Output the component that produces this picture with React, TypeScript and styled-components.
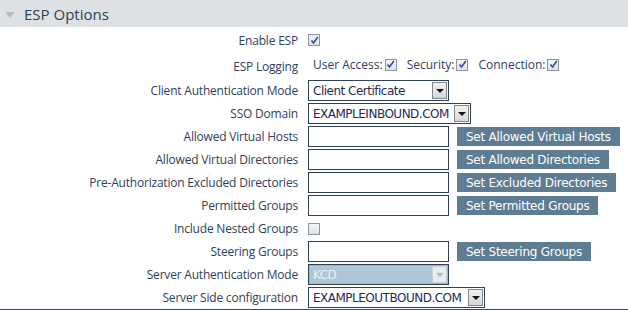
import styled, { createGlobalStyle } from 'styled-components';

const GlobalStyle = createGlobalStyle`
  html, body {
    margin: 0;
    padding: 0;
    background: #ffffff;
  }
  body {
    font-family: 'Open Sans', 'Liberation Sans', sans-serif;
  }
`;

const Panel = styled.div`
  width: 628px;
  height: 310px;
  background: #ffffff;
  overflow: hidden;
`;

const Header = styled.div`
  display: flex;
  align-items: center;
  gap: 9px;
  height: 27px;
  padding-left: 5px;
  background: #dde1e4;
  color: #2e3f55;
  font-size: 15px;
`;

const Caret = styled.span`
  width: 0;
  height: 0;
  border-left: 5px solid transparent;
  border-right: 5px solid transparent;
  border-top: 6px solid #b9bec3;
  margin-top: 2px;
`;

const Form = styled.div`
  display: grid;
  grid-template-columns: 298px 1fr;
  grid-template-rows: 26px 26px repeat(10, 23px);
  column-gap: 10px;
  border-bottom: 1px solid #3b4a5c;
`;

const Label = styled.div`
  display: flex;
  align-items: center;
  justify-content: flex-end;
  font-size: 12px;
  color: #30405a;
  white-space: nowrap;
  letter-spacing: -0.2px;
`;

const Cell = styled.div`
  display: flex;
  align-items: center;
  gap: 8px;
`;

const Inline = styled.span<{ $first?: boolean }>`
  display: flex;
  align-items: center;
  gap: 2px;
  margin-left: ${p => (p.$first ? '5px' : '10px')};
  margin-top: -3px;
  font-size: 12px;
  color: #30405a;
`;

const Box = styled.span`
  display: inline-flex;
  align-items: center;
  justify-content: center;
  width: 10px;
  height: 10px;
  border: 1px solid #8e959c;
  background: linear-gradient(#f4f5f6, #dfe2e5);
`;

const Check = ({ checked = true }: { checked?: boolean }) => (
  <Box>
    {checked && (
      <svg width="9" height="9" viewBox="0 0 9 9">
        <path d="M1.5 4.5 L3.5 7 L7.8 1" fill="none" stroke="#2f4aa0" strokeWidth="1.6" />
      </svg>
    )}
  </Box>
);

const SelectBox = styled.div<{ $width: number; $disabled?: boolean }>`
  display: flex;
  align-items: center;
  justify-content: space-between;
  box-sizing: border-box;
  width: ${p => p.$width}px;
  height: 21px;
  padding: 0 1px 0 4px;
  border: 1px solid #2f4053;
  box-shadow: inset 0 0 0 1px ${p => (p.$disabled ? '#9fb7c8' : '#ffffff')};
  background: ${p => (p.$disabled ? '#adc6d6' : '#ffffff')};
  color: ${p => (p.$disabled ? '#e8f0f5' : '#1f2a55')};
  font-family: 'DejaVu Sans', sans-serif;
  font-size: 12px;
  letter-spacing: -0.5px;
`;

const Arrow = styled.span<{ $disabled?: boolean }>`
  display: flex;
  align-items: center;
  justify-content: center;
  box-sizing: border-box;
  width: 15px;
  height: 17px;
  border: 1px solid ${p => (p.$disabled ? '#c8d0d6' : '#7f868c')};
  background: ${p => (p.$disabled ? '#e9ecee' : 'linear-gradient(#f2f2f2, #d4d6d8)')};
  &::after {
    content: '';
    border-left: 4px solid transparent;
    border-right: 4px solid transparent;
    border-top: 4px solid ${p => (p.$disabled ? '#b2b8bd' : '#111111')};
  }
`;

const Select = ({ value, width, disabled }: { value: string; width: number; disabled?: boolean }) => (
  <SelectBox $width={width} $disabled={disabled}>
    <span>{value}</span>
    <Arrow $disabled={disabled} />
  </SelectBox>
);

const TextInput = styled.div`
  box-sizing: border-box;
  width: 141px;
  height: 21px;
  border: 1px solid #2f4053;
  box-shadow: inset 0 0 0 1px #ffffff;
  background: #ffffff;
`;

const Button = styled.div`
  display: flex;
  align-items: center;
  height: 19px;
  padding: 0 9px;
  background: #5e7c92;
  color: #ffffff;
  font-family: 'DejaVu Sans', sans-serif;
  font-size: 12px;
  letter-spacing: -0.25px;
`;

const App = () => {
  return (
    <Panel>
      <GlobalStyle />
      <Header>
        <Caret />
        ESP Options
      </Header>
      <Form>
        <Label>Enable ESP</Label>
        <Cell>
          <Check />
        </Cell>

        <Label>ESP Logging</Label>
        <Cell style={{ gap: 0 }}>
          <Inline $first>
            User Access: <Check />
          </Inline>
          <Inline>
            Security: <Check />
          </Inline>
          <Inline>
            Connection: <Check />
          </Inline>
        </Cell>

        <Label>Client Authentication Mode</Label>
        <Cell>
          <Select value="Client Certificate" width={141} />
        </Cell>

        <Label>SSO Domain</Label>
        <Cell>
          <Select value="EXAMPLEINBOUND.COM" width={163} />
        </Cell>

        <Label>Allowed Virtual Hosts</Label>
        <Cell>
          <TextInput />
          <Button>Set Allowed Virtual Hosts</Button>
        </Cell>

        <Label>Allowed Virtual Directories</Label>
        <Cell>
          <TextInput />
          <Button>Set Allowed Directories</Button>
        </Cell>

        <Label>Pre-Authorization Excluded Directories</Label>
        <Cell>
          <TextInput />
          <Button>Set Excluded Directories</Button>
        </Cell>

        <Label>Permitted Groups</Label>
        <Cell>
          <TextInput />
          <Button>Set Permitted Groups</Button>
        </Cell>

        <Label>Include Nested Groups</Label>
        <Cell>
          <Check checked={false} />
        </Cell>

        <Label>Steering Groups</Label>
        <Cell>
          <TextInput />
          <Button>Set Steering Groups</Button>
        </Cell>

        <Label>Server Authentication Mode</Label>
        <Cell>
          <Select value="KCD" width={141} disabled />
        </Cell>

        <Label>Server Side configuration</Label>
        <Cell>
          <Select value="EXAMPLEOUTBOUND.COM" width={177} />
        </Cell>
      </Form>
    </Panel>
  );
};

export default App;
